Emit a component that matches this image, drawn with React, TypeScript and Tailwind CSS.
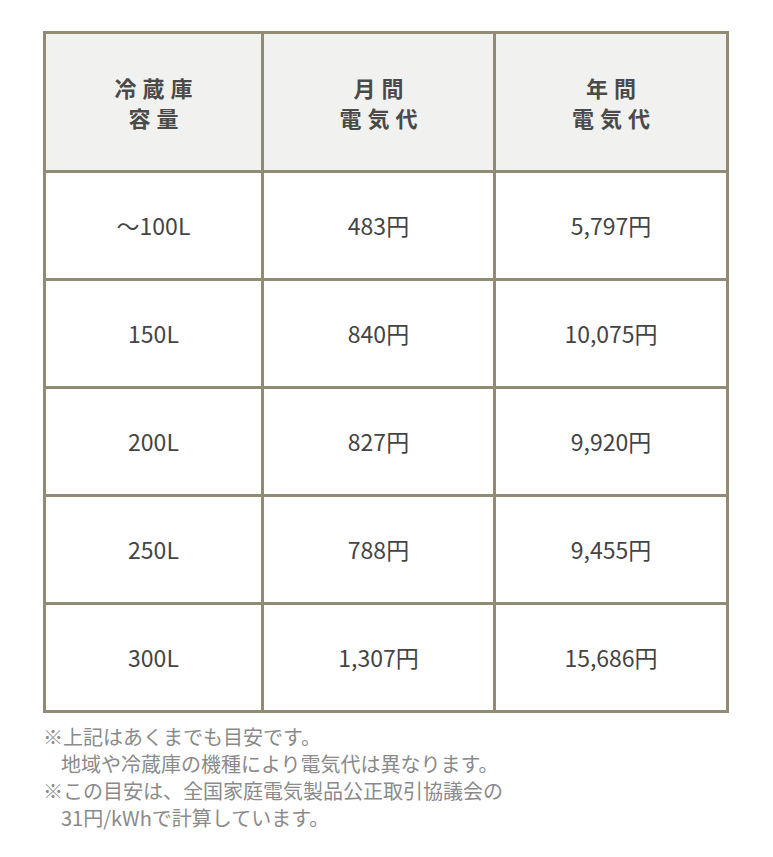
const rows = [
  ["〜100L", "483円", "5,797円"],
  ["150L", "840円", "10,075円"],
  ["200L", "827円", "9,920円"],
  ["250L", "788円", "9,455円"],
  ["300L", "1,307円", "15,686円"],
]

const headers = [
  ["冷蔵庫", "容量"],
  ["月間", "電気代"],
  ["年間", "電気代"],
]

export default function App() {
  return (
    <div
      className="w-[773px] min-h-[857px] bg-white pt-[31px] pl-[43px] pr-[44px]"
      style={{ fontFamily: '"Noto Sans CJK JP", "Noto Sans", sans-serif' }}
    >
      <table className="w-full border-collapse border-[3px] border-[#928b74] table-fixed">
        <colgroup>
          <col className="w-[218px]" />
          <col className="w-[232px]" />
          <col />
        </colgroup>
        <thead>
          <tr className="h-[139px] bg-[#f1f2ef]">
            {headers.map((h, i) => (
              <th
                key={i}
                className="border-[3px] border-[#928b74] text-[22px] leading-[30px] font-bold text-[#4a4a4a] tracking-[6px] pl-[6px] text-center"
              >
                {h[0]}
                <br />
                {h[1]}
              </th>
            ))}
          </tr>
        </thead>
        <tbody>
          {rows.map((r, i) => (
            <tr key={i} className="h-[108px]">
              {r.map((c, j) => (
                <td
                  key={j}
                  className="border-[3px] border-[#928b74] text-center text-[23px] text-[#444444]"
                >
                  {c}
                </td>
              ))}
            </tr>
          ))}
        </tbody>
      </table>

      {/* notes */}
      <div className="mt-[10px] text-[20px] leading-[27px] text-[#8a8a8a]">
        <p>※上記はあくまでも目安です。</p>
        <p className="pl-[18px]">地域や冷蔵庫の機種により電気代は異なります。</p>
        <p>※この目安は、全国家庭電気製品公正取引協議会の</p>
        <p className="pl-[18px]">31円/kWhで計算しています。</p>
      </div>
    </div>
  )
}
